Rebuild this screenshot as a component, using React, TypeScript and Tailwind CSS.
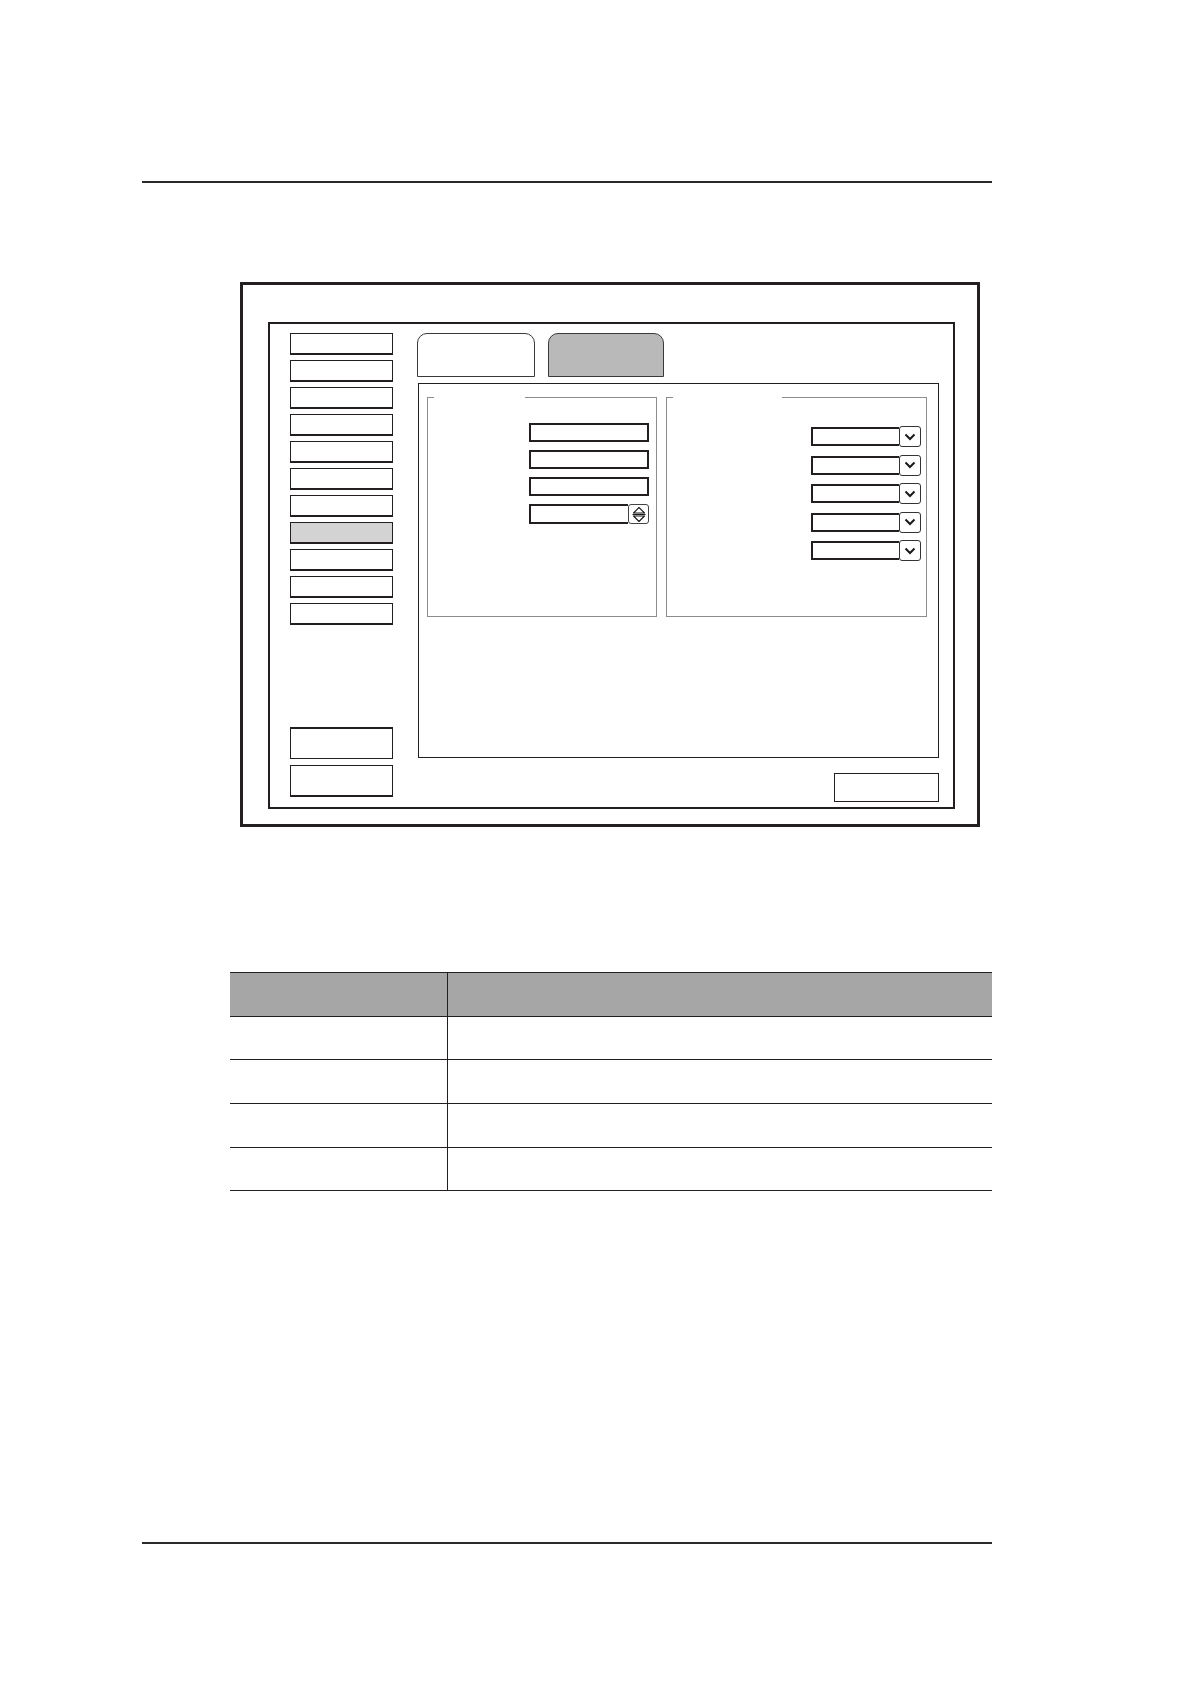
import React from "react";

const sideItems = Array.from({ length: 11 }, (_, i) => i);
const dropdowns = [0, 1, 2, 3, 4];
const rowHeights = ["h-[43px]", "h-[44px]", "h-[44px]", "h-[43px]"];

function Chevron() {
  return (
    <svg width="12" height="8" viewBox="0 0 12 8" fill="none">
      <path d="M1.5 1.5 L6 6 L10.5 1.5" stroke="#1a1a1a" strokeWidth="2" />
    </svg>
  );
}

function SpinIcon() {
  return (
    <svg width="16" height="17" viewBox="0 0 16 17" fill="none">
      <path d="M8 1.5 L13.5 7 L2.5 7 Z" stroke="#1a1a1a" strokeWidth="1.1" strokeLinejoin="round" />
      <path d="M1.5 8.5 L14.5 8.5" stroke="#1a1a1a" strokeWidth="1.1" />
      <path d="M2.5 10 L13.5 10 L8 15.5 Z" stroke="#1a1a1a" strokeWidth="1.1" strokeLinejoin="round" />
    </svg>
  );
}

function GroupBox({ width, legendWidth, children }: { width: string; legendWidth: string; children: React.ReactNode }) {
  return (
    <div className={`flex flex-col h-[220px] ${width}`}>
      <div className="flex h-px">
        <div className="w-[7px] bg-[#8c8c8c]" />
        <div className={legendWidth} />
        <div className="flex-1 bg-[#8c8c8c]" />
      </div>
      <div className="flex-1 border-x border-b border-[#8c8c8c]">{children}</div>
    </div>
  );
}

export default function App() {
  return (
    <div className="w-[1191px] min-h-[1684px] bg-white pt-[181px]">
      <div className="ml-[142px] w-[850px] h-[2px] bg-[#2a2a2a]" />

      {/* settings window */}
      <div className="ml-[240px] mt-[99px] w-[740px] h-[545px] border-[3px] border-[#231f20] pl-[25px] pt-[37px]">
        <div className="w-[687px] h-[487px] border-2 border-[#231f20] flex pl-[20px] pt-[9px] pb-[10px]">
          <div className="w-[103px] h-full flex flex-col">
            <div className="flex flex-col gap-[5px]">
              {sideItems.map((i) => (
                <div
                  key={i}
                  className={
                    i === 7
                      ? "h-[22px] border border-b-2 border-[#231f20] bg-[#d3d3d3]"
                      : "h-[22px] border border-b-2 border-[#231f20] bg-white"
                  }
                />
              ))}
            </div>
            <div className="mt-auto flex flex-col gap-[6px]">
              <div className="h-[32px] border border-t-2 border-[#231f20]" />
              <div className="h-[32px] border border-b-2 border-[#231f20]" />
            </div>
          </div>

          <div className="ml-[24px] w-[522px] flex flex-col">
            <div className="flex gap-[13px] h-[44px] shrink-0">
              <div className="w-[118px] h-full rounded-t-[10px] border-[1.5px] border-[#3a3a3a] bg-white" />
              <div className="w-[116px] h-full rounded-t-[10px] border-[1.5px] border-[#3a3a3a] bg-[#b9b9b9]" />
            </div>

            <div className="mt-[6px] ml-px w-[521px] h-[375px] shrink-0 border border-[#231f20] pl-[8px] pt-[13px] flex gap-[9px]">
              <GroupBox width="w-[230px]" legendWidth="w-[91px]">
                <div className="flex flex-col items-end pr-[7px] pt-[25px] gap-[8px]">
                  <div className="w-[120px] h-[19px] border-2 border-[#231f20]" />
                  <div className="w-[120px] h-[19px] border-2 border-[#231f20]" />
                  <div className="w-[120px] h-[19px] border-2 border-[#231f20]" />
                  <div className="w-[120px] h-[20px] flex">
                    <div className="flex-1 border-2 border-r-0 border-[#231f20]" />
                    <div className="w-[21px] border-[1.5px] border-[#444] rounded-[3px] flex items-center justify-center bg-white">
                      <SpinIcon />
                    </div>
                  </div>
                </div>
              </GroupBox>

              <GroupBox width="w-[261px]" legendWidth="w-[109px]">
                <div className="flex flex-col items-end pr-[5px] pt-[29px] gap-[9.6px]">
                  {dropdowns.map((d) => (
                    <div key={d} className="w-[110px] h-[19px] flex">
                      <div className="flex-1 border-2 border-r-0 border-[#231f20]" />
                      <div className="w-[22px] -my-px border-[1.5px] border-[#333] rounded-[3px] flex items-center justify-center bg-white">
                        <Chevron />
                      </div>
                    </div>
                  ))}
                </div>
              </GroupBox>
            </div>

            <div className="mt-[15px] flex justify-end shrink-0">
              <div className="w-[105px] h-[29px] border border-[#231f20]" />
            </div>
          </div>
        </div>
      </div>

      {/* parameter table */}
      <div className="ml-[230px] mt-[145px] w-[762px] border-t border-[#231f20]">
        <div className="flex h-[44px] bg-[#a7a6a7] border-b border-[#231f20]">
          <div className="w-[218px] border-r border-[#231f20]" />
          <div className="flex-1" />
        </div>
        {rowHeights.map((h, i) => (
          <div key={i} className={`flex ${h} border-b border-[#231f20]`}>
            <div className="w-[218px] border-r border-[#231f20]" />
            <div className="flex-1" />
          </div>
        ))}
      </div>

      <div className="ml-[142px] w-[850px] mt-[351px] h-[2px] bg-[#2a2a2a]" />
    </div>
  );
}
